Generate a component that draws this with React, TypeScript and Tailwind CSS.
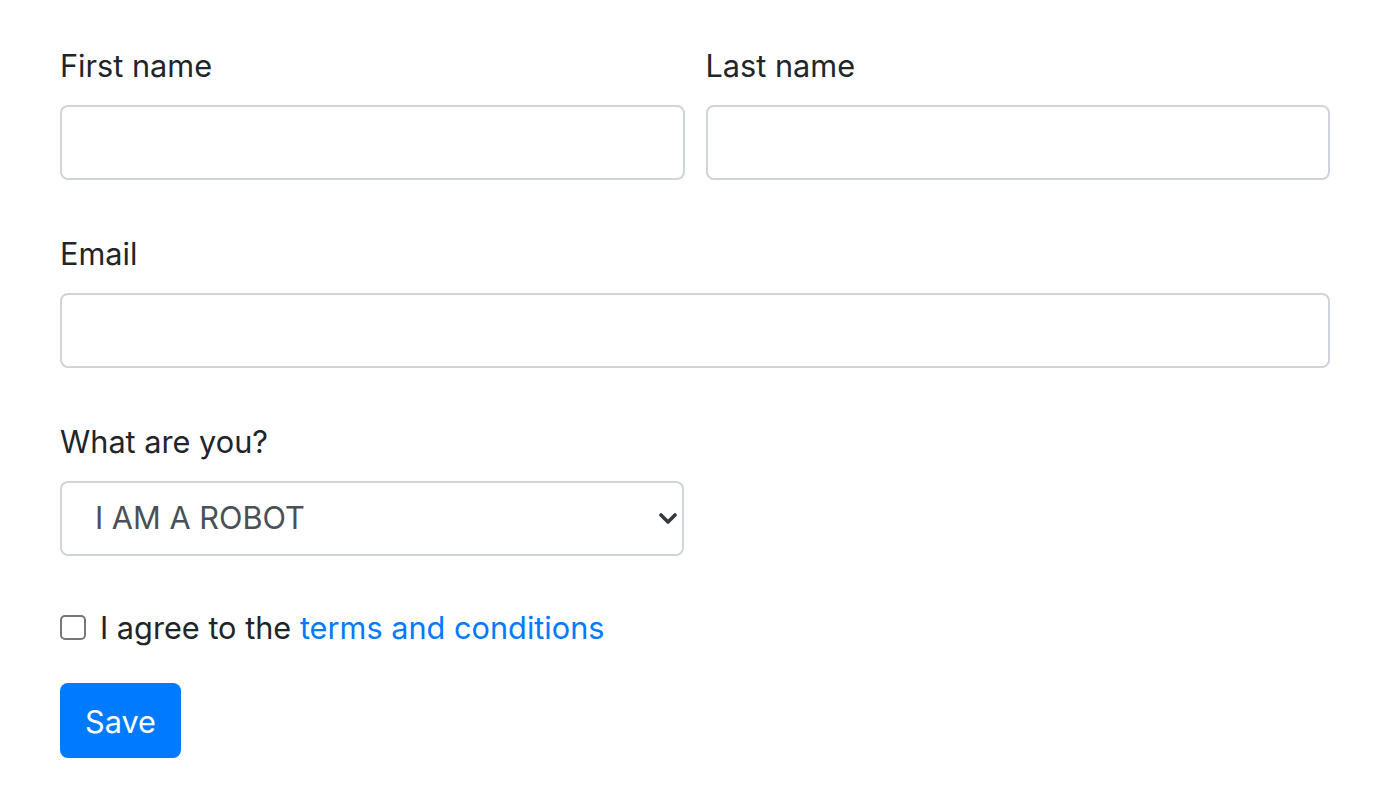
import { useState } from "react";

const font = { fontFamily: 'Inter, "Liberation Sans", Arial, sans-serif' };

const Field = ({ label }: { label: string }) => (
  <div className="flex flex-col">
    <label className="mb-[16px] text-[30.7px] leading-[47px] text-[#212529]">
      {label}
    </label>
    <input
      type="text"
      className="h-[75px] w-full rounded-[8px] border-2 border-[#ced4da] bg-white px-[24px] text-[30.7px] text-[#495057] outline-none"
    />
  </div>
);

export default function App() {
  const [agree, setAgree] = useState(false);

  return (
    <div className="min-h-screen bg-white" style={font}>
      <form className="ml-[60px] w-[1270px] pt-[42px]">
        <div className="mb-[50px] grid grid-cols-2 gap-x-[21px]">
          <Field label="First name" />
          <Field label="Last name" />
        </div>

        <div className="mb-[50px]">
          <Field label="Email" />
        </div>

        {/* Select */}
        <div className="mb-[48px] flex w-[624px] flex-col">
          <label className="mb-[16px] text-[30.7px] leading-[47px] text-[#212529]">
            What are you?
          </label>
          <div className="relative">
            <select className="h-[75px] w-full appearance-none rounded-[8px] border-2 border-[#ced4da] bg-white pl-[33px] pr-[56px] text-[30.7px] text-[#495057] outline-none">
              <option>I AM A ROBOT</option>
              <option>I AM A HUMAN</option>
            </select>
            <svg
              className="pointer-events-none absolute right-[7px] top-[32px]"
              width="18"
              height="11"
              viewBox="0 0 18 11"
              fill="none"
            >
              <path
                d="M2 2l7 7 7-7"
                stroke="#343a40"
                strokeWidth="3.6"
                strokeLinecap="round"
                strokeLinejoin="round"
              />
            </svg>
          </div>
        </div>

        {/* Checkbox */}
        <div className="mb-[32px] flex items-center">
          <input
            type="checkbox"
            checked={agree}
            onChange={(e) => setAgree(e.target.checked)}
            className="h-[25px] w-[26px] appearance-none rounded-[5px] border-2 border-[#767676] bg-white checked:bg-[#007bff]"
          />
          <span className="ml-[14px] text-[30.7px] leading-[47px] text-[#212529]">
            I agree to the{" "}
            <a href="#" className="text-[#007bff]">
              terms and conditions
            </a>
          </span>
        </div>

        <button
          type="button"
          className="h-[75px] rounded-[8px] bg-[#007bff] px-[25px] pt-[3px] text-[30.7px] text-white"
        >
          Save
        </button>
      </form>
    </div>
  );
}
